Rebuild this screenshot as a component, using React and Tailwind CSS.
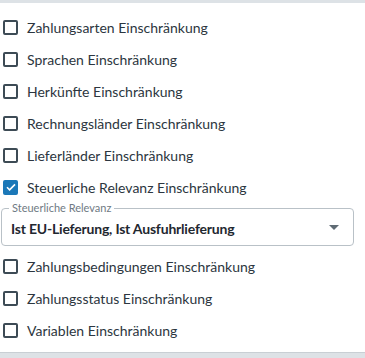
import React, { useState } from "react";

const items = [
  "Zahlungsarten Einschränkung",
  "Sprachen Einschränkung",
  "Herkünfte Einschränkung",
  "Rechnungsländer Einschränkung",
  "Lieferländer Einschränkung",
  "Steuerliche Relevanz Einschränkung",
];

const itemsAfter = [
  "Zahlungsbedingungen Einschränkung",
  "Zahlungsstatus Einschränkung",
  "Variablen Einschränkung",
];

const CheckRow = ({ label, checked }) => (
  <label className="flex items-center h-[32px] pl-[3px] gap-[9px] cursor-pointer">
    {checked ? (
      <span className="flex items-center justify-center w-[15px] h-[15px] rounded-[2px] bg-[#1b78b8]">
        <svg width="12" height="12" viewBox="0 0 12 12" fill="none">
          <path d="M2 6.3l2.6 2.6L10 3.4" stroke="#fff" strokeWidth="1.6" />
        </svg>
      </span>
    ) : (
      <span className="w-[15px] h-[15px] rounded-[2px] border-2 border-[#3d4b55]" />
    )}
    <span className="text-[14px] text-[#2c3640]">{label}</span>
  </label>
);

export default function App() {
  const [value] = useState("Ist EU-Lieferung, Ist Ausfuhrlieferung");

  return (
    <div className="w-[365px] h-[358px] bg-white flex flex-col font-['Lato',sans-serif] overflow-hidden">
      <div className="h-[3px] bg-[#dde2e6]" />
      <div className="flex-1 pt-[8px] pr-[11px]">
        {items.map((it) => (
          <CheckRow key={it} label={it} checked={it.startsWith("Steuerliche")} />
        ))}

        <div className="relative mt-[5px] ml-[1px] h-[38px] border border-[#b9c1c7] rounded-[4px] flex items-center pl-[9px] pr-[14px]">
          <span className="absolute -top-[7px] left-[7px] px-[3px] bg-white text-[11px] leading-[12px] text-[#6f7a83]">
            Steuerliche Relevanz
          </span>
          <span className="flex-1 pt-[3px] text-[14px] font-bold tracking-[-0.2px] text-[#1f2830]">{value}</span>
          <svg width="10" height="5" viewBox="0 0 10 5">
            <path d="M0 0h10L5 5z" fill="#5f6b74" />
          </svg>
        </div>

        <div className="mt-[4px]">
          {itemsAfter.map((it) => (
            <CheckRow key={it} label={it} />
          ))}
        </div>
      </div>
      <div className="h-[6px] bg-[#dde2e6] border-t border-[#c9cfd4]" />
    </div>
  );
}
